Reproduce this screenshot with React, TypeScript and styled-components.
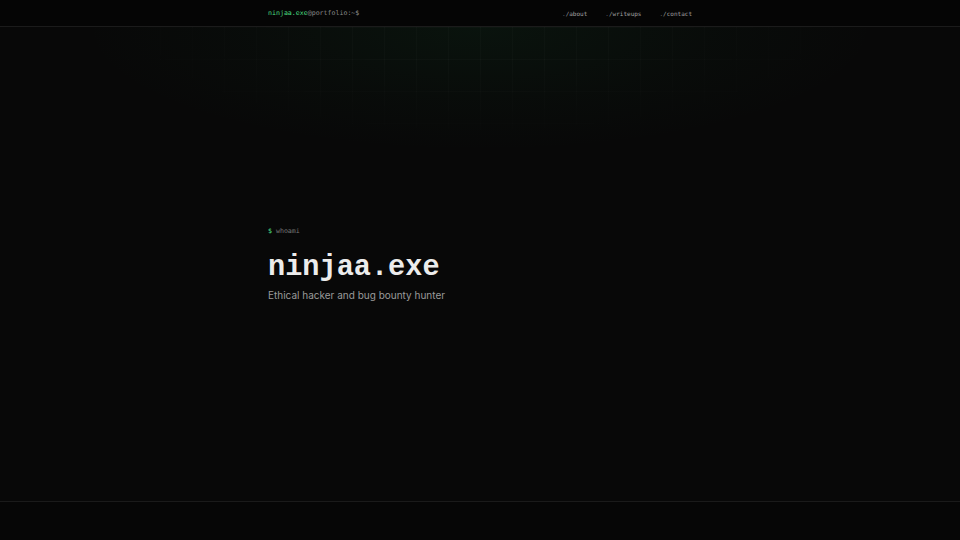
import React from "react";
import styled, { createGlobalStyle } from "styled-components";

const Global = createGlobalStyle`
  html, body { margin: 0; padding: 0; background: #080808; }
  body { font-family: "Inter", "Noto Sans", sans-serif; color: #e5e5e5; }
  #root { min-height: 100vh; }
  * { box-sizing: border-box; }
`;

const Page = styled.div`
  display: flex;
  flex-direction: column;
  min-height: 100vh;
  background: #080808;
`;

const Header = styled.header`
  height: 27px;
  border-bottom: 1px solid #1b1b1b;
  background: #050505;
  display: flex;
  justify-content: center;
  position: relative;
  z-index: 2;
`;

const Container = styled.div`
  width: 424px;
  display: flex;
  align-items: center;
  justify-content: space-between;
`;

const Logo = styled.div`
  font-family: "DejaVu Sans Mono", "Liberation Mono", monospace;
  font-size: 6.6px;
  color: #8a8a8a;
  letter-spacing: 0;
`;

const Green = styled.span`
  color: #4ade80;
`;

const Nav = styled.nav`
  display: flex;
  gap: 18px;
`;

const NavLink = styled.a`
  font-family: "DejaVu Sans Mono", "Liberation Mono", monospace;
  font-size: 6px;
  color: #a0a0a0;
  text-decoration: none;
`;

const Dim = styled.span`
  color: #666;
`;

const Main = styled.main`
  flex: 1;
  position: relative;
  display: flex;
  justify-content: center;
  align-items: center;
  overflow: hidden;
`;

const Glow = styled.div`
  position: absolute;
  inset: 0;
  pointer-events: none;
  background:
    radial-gradient(ellipse 400px 125px at 50% 0%, rgba(30, 160, 80, 0.075), rgba(30, 160, 80, 0.025) 60%, transparent 100%);
`;

const Grid = styled.div`
  position: absolute;
  inset: 0;
  pointer-events: none;
  background-image:
    linear-gradient(to right, rgba(255, 255, 255, 0.018) 1px, transparent 1px),
    linear-gradient(to bottom, rgba(255, 255, 255, 0.018) 1px, transparent 1px);
  background-size: 32px 32px;
  background-position: 0 0;
  -webkit-mask-image: radial-gradient(ellipse 420px 130px at 50% 0%, #000 30%, transparent 100%);
  mask-image: radial-gradient(ellipse 420px 130px at 50% 0%, #000 30%, transparent 100%);
`;

const Hero = styled.section`
  width: 424px;
  position: relative;
  z-index: 1;
  display: flex;
  flex-direction: column;
`;

const Prompt = styled.div`
  font-family: "DejaVu Sans Mono", "Liberation Mono", monospace;
  font-size: 6.6px;
  color: #777;
  margin-bottom: 19px;
`;

const Title = styled.h1`
  margin: 0;
  font-family: "Liberation Mono", "DejaVu Sans Mono", monospace;
  font-weight: 700;
  font-size: 28.6px;
  line-height: 1;
  color: #ececec;
  letter-spacing: 0;
`;

const Subtitle = styled.p`
  margin: 7px 0 0;
  font-family: "Inter", "Noto Sans", sans-serif;
  font-size: 10px;
  color: #9a9a9a;
`;

const Footer = styled.footer`
  height: 39px;
  border-top: 1px solid #1a1a1a;
  background: #060606;
`;

export default function App() {
  return (
    <>
      <Global />
      <Page>
        <Header>
          <Container>
            <Logo>
              <Green>ninjaa.exe</Green>@portfolio:~$
            </Logo>
            <Nav>
              <NavLink href="#about"><Dim>.</Dim>/about</NavLink>
              <NavLink href="#writeups"><Dim>.</Dim>/writeups</NavLink>
              <NavLink href="#contact"><Dim>.</Dim>/contact</NavLink>
            </Nav>
          </Container>
        </Header>
        <Main>
          <Glow />
          <Grid />
          <Hero>
            <Prompt>
              <Green>$</Green> whoami
            </Prompt>
            <Title>ninjaa.exe</Title>
            <Subtitle>Ethical hacker and bug bounty hunter</Subtitle>
          </Hero>
        </Main>
        <Footer />
      </Page>
    </>
  );
}
